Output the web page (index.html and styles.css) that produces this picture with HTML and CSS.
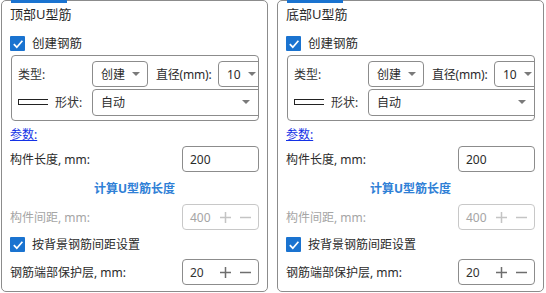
FILE: index.html
```html
<!DOCTYPE html>
<html lang="zh-CN">
<head>
    <meta charset="UTF-8">
    <meta name="viewport" content="width=device-width, initial-scale=1.0">
    <title>U型筋</title>
    <link rel="stylesheet" href="styles.css">
</head>
<body>
<div class="panels">
    <section class="panel">
        <span class="tab-mark"></span>
        <div class="title">顶部U型筋</div>
        <label class="check">
            <span class="box"><svg width="14" height="14" viewBox="0 0 14 14"><path d="M2.8 7.2 L5.8 10.2 L11.4 3.8" fill="none" stroke="#fff" stroke-width="1.7"/></svg></span>
            创建钢筋
        </label>
        <div class="group">
            <div class="row">
                <span class="lbl">类型:</span>
                <div class="select sel-type"><span>创建</span><i class="caret"></i></div>
                <span class="dia-lbl">直径(mm):</span>
                <div class="select sel-dia"><span>10</span><i class="caret"></i></div>
            </div>
            <div class="row">
                <span class="lbl shape-lbl"><span class="shape-icon"></span>形状:</span>
                <div class="select sel-shape"><span>自动</span><i class="caret"></i></div>
            </div>
        </div>
        <a class="params" href="#">参数:</a>
        <div class="field first">
            <span>构件长度, mm:</span>
            <div class="input">200</div>
        </div>
        <div class="calc">计算U型筋长度</div>
        <div class="field disabled">
            <span>构件间距, mm:</span>
            <div class="input spin">
                <span class="num">400</span>
                <svg width="11" height="11" viewBox="0 0 11 11"><path d="M0 5.5 H11 M5.5 0 V11" stroke="currentColor" stroke-width="1.5"/></svg>
                <svg width="11" height="11" viewBox="0 0 11 11"><path d="M0 5.5 H11" stroke="currentColor" stroke-width="1.5"/></svg>
            </div>
        </div>
        <label class="check check-bg">
            <span class="box"><svg width="14" height="14" viewBox="0 0 14 14"><path d="M2.8 7.2 L5.8 10.2 L11.4 3.8" fill="none" stroke="#fff" stroke-width="1.7"/></svg></span>
            按背景钢筋间距设置
        </label>
        <div class="field cover">
            <span>钢筋端部保护层, mm:</span>
            <div class="input spin">
                <span class="num">20</span>
                <svg width="11" height="11" viewBox="0 0 11 11"><path d="M0 5.5 H11 M5.5 0 V11" stroke="currentColor" stroke-width="1.5"/></svg>
                <svg width="11" height="11" viewBox="0 0 11 11"><path d="M0 5.5 H11" stroke="currentColor" stroke-width="1.5"/></svg>
            </div>
        </div>
    </section>

    <section class="panel">
        <span class="tab-mark"></span>
        <div class="title">底部U型筋</div>
        <label class="check">
            <span class="box"><svg width="14" height="14" viewBox="0 0 14 14"><path d="M2.8 7.2 L5.8 10.2 L11.4 3.8" fill="none" stroke="#fff" stroke-width="1.7"/></svg></span>
            创建钢筋
        </label>
        <div class="group">
            <div class="row">
                <span class="lbl">类型:</span>
                <div class="select sel-type"><span>创建</span><i class="caret"></i></div>
                <span class="dia-lbl">直径(mm):</span>
                <div class="select sel-dia"><span>10</span><i class="caret"></i></div>
            </div>
            <div class="row">
                <span class="lbl shape-lbl"><span class="shape-icon"></span>形状:</span>
                <div class="select sel-shape"><span>自动</span><i class="caret"></i></div>
            </div>
        </div>
        <a class="params" href="#">参数:</a>
        <div class="field first">
            <span>构件长度, mm:</span>
            <div class="input">200</div>
        </div>
        <div class="calc">计算U型筋长度</div>
        <div class="field disabled">
            <span>构件间距, mm:</span>
            <div class="input spin">
                <span class="num">400</span>
                <svg width="11" height="11" viewBox="0 0 11 11"><path d="M0 5.5 H11 M5.5 0 V11" stroke="currentColor" stroke-width="1.5"/></svg>
                <svg width="11" height="11" viewBox="0 0 11 11"><path d="M0 5.5 H11" stroke="currentColor" stroke-width="1.5"/></svg>
            </div>
        </div>
        <label class="check check-bg">
            <span class="box"><svg width="14" height="14" viewBox="0 0 14 14"><path d="M2.8 7.2 L5.8 10.2 L11.4 3.8" fill="none" stroke="#fff" stroke-width="1.7"/></svg></span>
            按背景钢筋间距设置
        </label>
        <div class="field cover">
            <span>钢筋端部保护层, mm:</span>
            <div class="input spin">
                <span class="num">20</span>
                <svg width="11" height="11" viewBox="0 0 11 11"><path d="M0 5.5 H11 M5.5 0 V11" stroke="currentColor" stroke-width="1.5"/></svg>
                <svg width="11" height="11" viewBox="0 0 11 11"><path d="M0 5.5 H11" stroke="currentColor" stroke-width="1.5"/></svg>
            </div>
        </div>
    </section>
</div>
</body>
</html>
```

FILE: styles.css
```css
body {
    margin: 0;
    background-color: #fff;
    font-family: "Noto Sans", "Noto Sans CJK SC", sans-serif;
    font-size: 12px;
    color: #2b2b2b;
}

.panels {
    display: flex;
    gap: 9px;
    padding-left: 1px;
}

.panel {
    position: relative; /* for the tab mark */
    box-sizing: border-box;
    width: 267px;
    height: 292px;
    border: 1px solid #8c8c8c;
    border-radius: 5px;
    padding: 3px 8px 0 8px;
    display: flex;
    flex-direction: column;
}

.tab-mark {
    position: absolute;
    top: -1px;
    left: 9px;
    width: 56px;
    height: 3px;
    background-color: #1a73d0;
}

.title {
    height: 20px;
    line-height: 20px;
    font-size: 13px;
}

.check {
    display: flex;
    align-items: center;
    gap: 7px;
    height: 15px;
    line-height: 15px;
    margin-top: 12px;
    font-size: 12.5px;
}

.box {
    width: 15px;
    height: 15px;
    background-color: #1a73d0;
    border-radius: 1px;
    display: flex;
    align-items: center;
    justify-content: center;
}

.group {
    box-sizing: border-box;
    height: 66px;
    margin-top: 4px;
    margin-left: 1px;
    border: 1px solid #8c8c8c;
    border-radius: 4px;
    padding: 5px 0 0 6px;
    overflow: hidden;
    display: flex;
    flex-direction: column;
    gap: 2px;
}

.row {
    display: flex;
    align-items: center;
    height: 26px;
}

.lbl {
    width: 74px;
    flex-shrink: 0;
    color: #333;
}

.shape-lbl {
    display: flex;
    align-items: center;
}

.shape-icon {
    box-sizing: border-box;
    width: 30px;
    height: 6px;
    border: 1px solid #222;
    border-right: none;
    margin-right: 7px;
}

.dia-lbl {
    width: 57px;
    margin: 0 5px 0 8px;
    flex-shrink: 0;
    white-space: nowrap;
    letter-spacing: -0.2px;
}

.select {
    box-sizing: border-box;
    height: 26px;
    border: 1px solid #8c8c8c;
    border-radius: 4px;
    display: flex;
    align-items: center;
    justify-content: space-between;
    padding: 0 7px 0 8px;
    flex-shrink: 0;
}

.sel-type {
    width: 56px;
}

.sel-dia {
    width: 54px;
    margin-right: -14px;
    justify-content: flex-start;
    gap: 7px;
}

.sel-shape {
    width: 180px;
    height: 27px;
    margin-right: -14px;
    padding-right: 21px;
}

.caret {
    width: 0;
    height: 0;
    border-left: 4px solid transparent;
    border-right: 4px solid transparent;
    border-top: 4px solid #7a7a7a;
}

.params {
    margin-top: 6px;
    line-height: 16px;
    color: #1432e6;
    text-decoration: underline;
    align-self: flex-start;
}

.field {
    display: flex;
    align-items: center;
    justify-content: space-between;
    height: 26px;
}

.field.first {
    margin-top: 3px;
}

.input {
    box-sizing: border-box;
    width: 77px;
    height: 26px;
    border: 1px solid #8c8c8c;
    border-radius: 4px;
    padding: 0 7px;
    display: flex;
    align-items: center;
}

.spin {
    color: #333;
}

.spin .num {
    flex: 1;
}

.spin svg {
    color: #6e6e6e;
    margin-left: 9px;
}

.calc {
    margin-top: 9px;
    line-height: 16px;
    text-align: center;
    color: #2f80d6;
    font-weight: bold;
}

.disabled {
    margin-top: 7px;
    color: #a5a5a5;
}

.disabled .input {
    border-color: #c8c8c8;
    color: #a5a5a5;
}

.disabled .spin svg {
    color: #c4c4c4;
}

.check-bg {
    margin-top: 7px;
    font-size: 12px;
}

.cover {
    margin-top: 7px;
}
```
